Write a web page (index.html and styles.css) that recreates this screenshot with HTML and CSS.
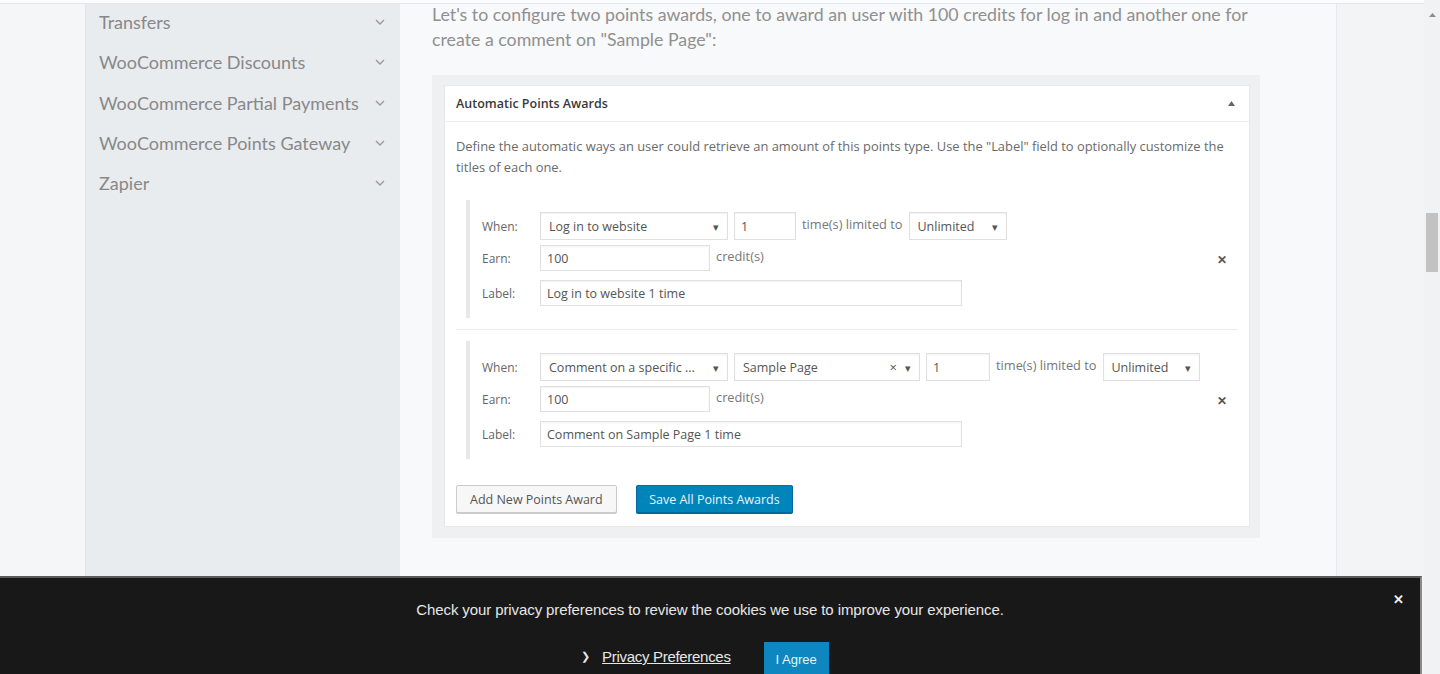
FILE: index.html
```html
<!DOCTYPE html>
<html lang="en">
<head>
  <meta charset="UTF-8">
  <meta name="viewport" content="width=device-width, initial-scale=1.0">
  <title>Points Types - Automatic Points Awards</title>
  <link rel="stylesheet" href="styles.css">
</head>
<body>
  <!-- Sticky header edge -->
  <div class="topbar"></div>

  <div class="page">
    <div class="gutter"></div>

    <!-- Docs sidebar -->
    <aside class="sidebar">
      <ul class="nav">
        <li class="nav-item"><span>Transfers</span><svg class="chev" width="10" height="6" viewBox="0 0 10 6"><polyline points="1,1 5,5 9,1"/></svg></li>
        <li class="nav-item"><span>WooCommerce Discounts</span><svg class="chev" width="10" height="6" viewBox="0 0 10 6"><polyline points="1,1 5,5 9,1"/></svg></li>
        <li class="nav-item"><span>WooCommerce Partial Payments</span><svg class="chev" width="10" height="6" viewBox="0 0 10 6"><polyline points="1,1 5,5 9,1"/></svg></li>
        <li class="nav-item"><span>WooCommerce Points Gateway</span><svg class="chev" width="10" height="6" viewBox="0 0 10 6"><polyline points="1,1 5,5 9,1"/></svg></li>
        <li class="nav-item"><span>Zapier</span><svg class="chev" width="10" height="6" viewBox="0 0 10 6"><polyline points="1,1 5,5 9,1"/></svg></li>
      </ul>
    </aside>

    <!-- Article content -->
    <main class="content">
      <p class="intro">Let's to configure two points awards, one to award an user with 100 credits for log in and another one for create a comment on "Sample Page":</p>

      <div class="panel-wrap">
        <div class="panel">
          <div class="panel-header">
            <h3>Automatic Points Awards</h3>
            <svg class="toggle" width="7" height="5" viewBox="0 0 7 5"><polygon points="3.5,0 7,5 0,5"/></svg>
          </div>
          <div class="panel-body">
            <p class="desc">Define the automatic ways an user could retrieve an amount of this points type. Use the "Label" field to optionally customize the titles of each one.</p>

            <div class="award-item">
              <div class="award">
                <div class="award-fields">
                  <div class="field-row">
                    <span class="field-label">When:</span>
                    <div class="select w-trigger"><span>Log in to website</span><i class="caret">▾</i></div>
                    <div class="input w-times">1</div>
                    <span class="field-text">time(s) limited to</span>
                    <div class="select w-limit"><span>Unlimited</span><i class="caret">▾</i></div>
                  </div>
                  <div class="field-row">
                    <span class="field-label">Earn:</span>
                    <div class="input w-points">100</div>
                    <span class="field-text">credit(s)</span>
                  </div>
                  <div class="field-row label-row">
                    <span class="field-label">Label:</span>
                    <div class="input w-label">Log in to website 1 time</div>
                  </div>
                </div>
                <span class="remove">✕</span>
              </div>
            </div>

            <div class="award-item award-last">
              <div class="award">
                <div class="award-fields">
                  <div class="field-row">
                    <span class="field-label">When:</span>
                    <div class="select w-trigger"><span>Comment on a specific ...</span><i class="caret">▾</i></div>
                    <div class="select w-post"><span>Sample Page</span><i class="clear">×</i><i class="caret">▾</i></div>
                    <div class="input w-times2">1</div>
                    <span class="field-text">time(s) limited to</span>
                    <div class="select w-limit2"><span>Unlimited</span><i class="caret">▾</i></div>
                  </div>
                  <div class="field-row">
                    <span class="field-label">Earn:</span>
                    <div class="input w-points">100</div>
                    <span class="field-text">credit(s)</span>
                  </div>
                  <div class="field-row label-row">
                    <span class="field-label">Label:</span>
                    <div class="input w-label">Comment on Sample Page 1 time</div>
                  </div>
                </div>
                <span class="remove">✕</span>
              </div>
            </div>

            <div class="actions">
              <button class="btn">Add New Points Award</button>
              <button class="btn btn-primary">Save All Points Awards</button>
            </div>
          </div>
        </div>
      </div>
    </main>

    <div class="gutter gutter-right"></div>

    <div class="scrollbar">
      <svg class="scroll-up" width="7" height="4" viewBox="0 0 7 4"><polygon points="3.5,0 7,4 0,4"/></svg>
      <div class="thumb"></div>
    </div>
  </div>

  <!-- Cookie notice -->
  <div class="cookie-bar">
    <p class="cookie-text">Check your privacy preferences to review the cookies we use to improve your experience.</p>
    <div class="cookie-actions">
      <a class="cookie-link" href="#"><span class="arrow">❯</span><u>Privacy Preferences</u></a>
      <button class="cookie-agree">I Agree</button>
    </div>
    <span class="cookie-close">✕</span>
  </div>
</body>
</html>
```

FILE: styles.css
```css
/* Reset and body */
html, body {
  margin: 0;
  padding: 0;
  height: 100%;
  overflow: hidden;
  background: #f3f5f7;
  font-family: "Open Sans", "Noto Sans", sans-serif;
}

.topbar {
  position: fixed;
  top: 0;
  left: 0;
  right: 16px;
  height: 3px;
  background: #fbfcfd;
  border-bottom: 1px solid #e3e6e9;
  z-index: 2;
}

.page {
  display: flex;
  height: 100vh;
}

.gutter {
  width: 85px;
  flex-shrink: 0;
  background: #f4f6f8;
}

.gutter-right {
  width: auto;
  flex: 1;
  background: #f2f4f6;
  border-left: 1px solid #e6e9ec;
}

/* Sidebar */
.sidebar {
  width: 314px;
  flex-shrink: 0;
  background: #e9ecef;
  border-left: 1px solid #e1e4e7;
}

.nav {
  list-style: none;
  margin: 0;
  padding: 2px 0 0;
}

.nav-item {
  display: flex;
  align-items: center;
  justify-content: space-between;
  height: 40.25px;
  padding: 0 15px 0 13px;
  font-family: Lato, "Open Sans", sans-serif;
  font-size: 18px;
  color: #888;
}

.chev {
  fill: none;
  stroke: #9a9a9a;
  stroke-width: 1.4;
}

/* Content */
.content {
  width: 936px;
  flex-shrink: 0;
  background: #f8f9fb;
  padding: 2px 76px 0 32px;
  box-sizing: border-box;
}

.intro {
  margin: 0 0 23px;
  font-family: Lato, "Open Sans", sans-serif;
  font-size: 17.75px;
  line-height: 25px;
  color: #909090;
}

.panel-wrap {
  background: #eef0f2;
  padding: 10px 10px 11px 12px;
}

.panel {
  background: #fff;
  border: 1px solid #e8e8e8;
}

.panel-header {
  display: flex;
  align-items: center;
  justify-content: space-between;
  height: 35px;
  padding: 0 14px 0 11px;
  border-bottom: 1px solid #eeeeee;
}

.panel-header h3 {
  margin: 0;
  font-size: 12.5px;
  font-weight: 600;
  color: #3a3a3a;
}

.toggle {
  fill: #666;
}

.panel-body {
  padding: 14px 11px 13px 11px;
}

.desc {
  margin: 0 0 11px;
  font-size: 12.9px;
  line-height: 21px;
  color: #6a6a6a;
}

/* Award rows */
.award-item {
  padding: 11px 0;
  border-bottom: 1px solid #ececec;
}

.award-item.award-last {
  border-bottom: 0;
}

.award {
  display: flex;
  align-items: center;
  margin-left: 10px;
  padding: 12px 11px 12px 12px;
  border-left: 4px solid #e7e8ea;
}

.award-fields {
  flex: 1;
}

.field-row {
  display: flex;
  align-items: center;
  gap: 6px;
}

.field-row + .field-row {
  margin-top: 5px;
}

.field-row.label-row {
  margin-top: 9px;
}

.field-label {
  width: 52px;
  font-size: 12px;
  color: #666;
}

.field-text {
  font-size: 12.8px;
  color: #777;
  margin-top: -4px;
}

.select,
.input {
  display: flex;
  align-items: center;
  box-sizing: border-box;
  height: 28px;
  padding: 0 8px;
  background: #fff;
  border: 1px solid #e0e0e0;
  box-shadow: inset 0 1px 2px rgba(0, 0, 0, 0.05);
  font-size: 12.5px;
  color: #555;
  white-space: nowrap;
}

.input {
  height: 26px;
  padding: 0 6px;
}

.select span {
  flex: 1;
}

.caret {
  font-style: normal;
  font-size: 11px;
  color: #555;
  margin-left: 4px;
}

.clear {
  font-style: normal;
  font-size: 13px;
  color: #555;
  margin-right: 4px;
}

.w-trigger { width: 188px; }
.w-post { width: 186px; }
.w-times { width: 62px; height: 28px; }
.w-times2 { width: 64px; height: 28px; }
.w-limit { width: 98px; }
.w-limit2 { width: 97px; }
.w-points { width: 170px; }
.w-label { width: 422px; }

.remove {
  font-size: 12px;
  font-weight: 700;
  color: #555;
}

/* Buttons */
.actions {
  display: flex;
  gap: 19px;
  padding-top: 15px;
}

.btn {
  height: 28px;
  padding: 0 13px;
  background: #f7f7f7;
  border: 1px solid #cccccc;
  border-radius: 2px;
  box-shadow: 0 1px 0 #ccc;
  font-family: inherit;
  font-size: 12.5px;
  color: #555;
}

.btn-primary {
  padding: 0 12.5px;
  background: #0085ba;
  border-color: #0073aa #006799 #006799;
  box-shadow: 0 1px 0 #006799;
  color: #e8f4fa;
}

/* Fake scrollbar */
.scrollbar {
  position: relative;
  width: 16px;
  flex-shrink: 0;
  background: #f1f2f3;
}

.scroll-up {
  position: absolute;
  top: 13px;
  left: 5px;
  fill: #8d8d8d;
}

.thumb {
  position: absolute;
  top: 213px;
  left: 2px;
  width: 12px;
  height: 59px;
  background: #c2c2c2;
}

/* Cookie bar */
.cookie-bar {
  position: fixed;
  left: 0;
  right: 18px;
  bottom: 0;
  height: 96px;
  background: #181818;
  border-top: 2px solid #5a5a5a;
  border-right: 2px solid #8a8a8a;
  text-align: center;
  font-family: "Liberation Sans", Arial, sans-serif;
  color: #e6e6e6;
  z-index: 3;
}

.cookie-text {
  margin: 23px 0 0;
  font-size: 15px;
  letter-spacing: -0.1px;
}

.cookie-actions {
  display: flex;
  justify-content: center;
  align-items: flex-start;
  gap: 33px;
  margin-top: 24px;
  padding-right: 10px;
}

.cookie-link {
  display: flex;
  align-items: center;
  gap: 12px;
  margin-top: 6px;
  color: #e6e6e6;
  text-decoration: none;
  font-size: 15px;
  letter-spacing: -0.3px;
}

.cookie-link .arrow {
  font-size: 11px;
}

.cookie-agree {
  width: 65px;
  height: 34px;
  background: #0e86bf;
  border: 0;
  color: #e6f3fa;
  font-family: inherit;
  font-size: 13px;
}

.cookie-close {
  position: absolute;
  top: 14px;
  right: 16px;
  font-size: 13px;
  font-weight: 700;
  color: #eee;
}
```
